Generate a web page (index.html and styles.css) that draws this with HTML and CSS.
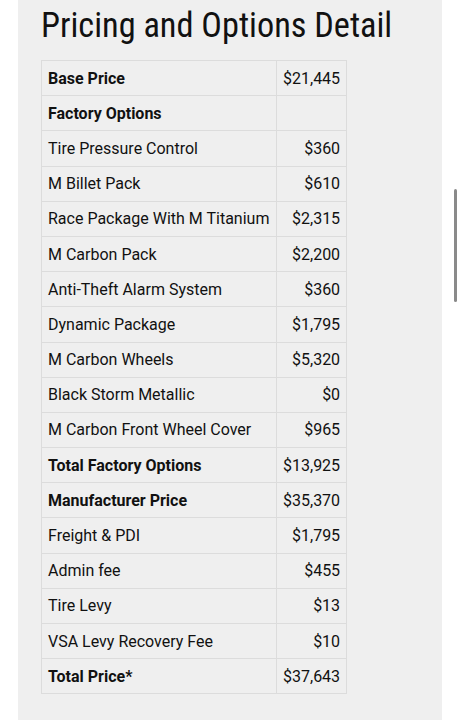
FILE: index.html
```html
<!DOCTYPE html>
<html lang="en">
<head>
    <meta charset="UTF-8">
    <meta name="viewport" content="width=device-width, initial-scale=1.0">
    <title>Pricing and Options Detail</title>
    <link rel="stylesheet" href="styles.css">
</head>
<body>
    <div class="panel">
        <h1 class="title">Pricing and Options Detail</h1>
        <table class="pricing">
            <tr class="bold"><td>Base Price</td><td>$21,445</td></tr>
            <tr class="bold"><td>Factory Options</td><td></td></tr>
            <tr><td>Tire Pressure Control</td><td>$360</td></tr>
            <tr><td>M Billet Pack</td><td>$610</td></tr>
            <tr><td>Race Package With M Titanium</td><td>$2,315</td></tr>
            <tr><td>M Carbon Pack</td><td>$2,200</td></tr>
            <tr><td>Anti-Theft Alarm System</td><td>$360</td></tr>
            <tr><td>Dynamic Package</td><td>$1,795</td></tr>
            <tr><td>M Carbon Wheels</td><td>$5,320</td></tr>
            <tr><td>Black Storm Metallic</td><td>$0</td></tr>
            <tr><td>M Carbon Front Wheel Cover</td><td>$965</td></tr>
            <tr class="bold"><td>Total Factory Options</td><td>$13,925</td></tr>
            <tr class="bold"><td>Manufacturer Price</td><td>$35,370</td></tr>
            <tr><td>Freight &amp; PDI</td><td>$1,795</td></tr>
            <tr><td>Admin fee</td><td>$455</td></tr>
            <tr><td>Tire Levy</td><td>$13</td></tr>
            <tr><td>VSA Levy Recovery Fee</td><td>$10</td></tr>
            <tr class="bold"><td>Total Price*</td><td>$37,643</td></tr>
        </table>
    </div>
    <div class="scrollbar"></div>
</body>
</html>
```
FILE: styles.css
```css
body {
    margin: 0;
    background: #fff;
    font-family: Roboto, "Noto Sans", sans-serif;
    color: #111;
    position: relative;
    height: 720px;
    overflow: hidden;
}
.panel {
    margin-left: 18px;
    width: 401px;
    min-height: 720px;
    padding-left: 23px;
    background: #efefef;
}
.title {
    margin: 0;
    padding-top: 4px;
    font-family: "Roboto Condensed", Roboto, sans-serif;
    font-stretch: condensed;
    font-weight: 400;
    font-size: 34.3px;
    line-height: 42px;
    color: #111;
    white-space: nowrap;
}
.pricing {
    margin-top: 14px;
    border-collapse: collapse;
    font-size: 16px;
}
.pricing td {
    border: 1px solid #dcdcdc;
    height: 35.2px;
    padding: 0 6px 0 6px;
    box-sizing: border-box;
    white-space: nowrap;
}
.pricing td:first-child {
    width: 235px;
}
.pricing td:last-child {
    width: 69px;
    text-align: right;
}
.pricing .bold td {
    font-weight: 700;
}
.pricing .bold td:last-child {
    font-weight: 400;
}
.scrollbar {
    position: absolute;
    left: 454px;
    top: 189px;
    width: 3px;
    height: 113px;
    background: #8a8a8a;
    border-radius: 2px;
}
```
